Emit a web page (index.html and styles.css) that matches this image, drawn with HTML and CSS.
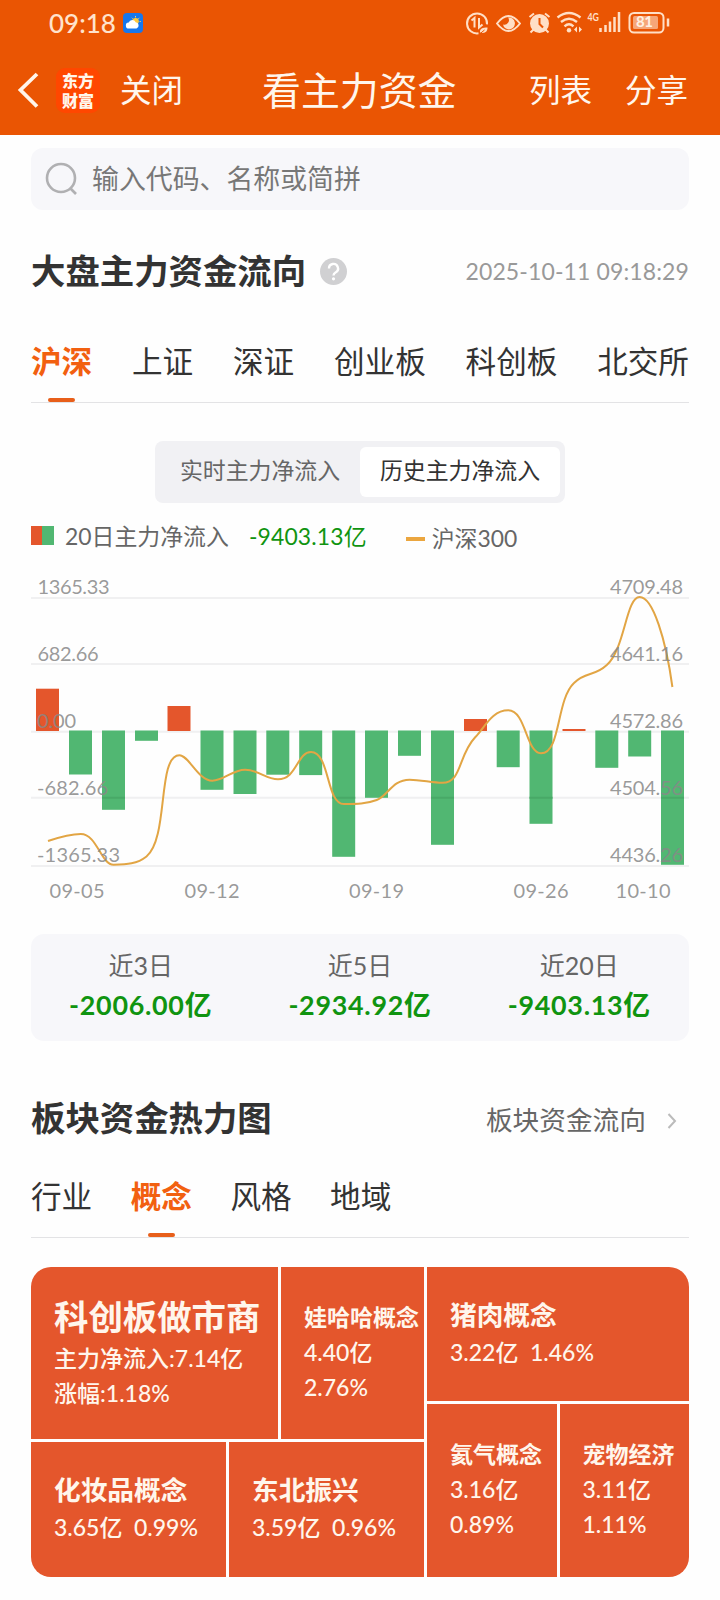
FILE: index.html
```html
<!DOCTYPE html>
<html lang="zh-CN">
<head>
  <meta charset="UTF-8">
  <meta name="viewport" content="width=device-width, initial-scale=1">
  <title>看主力资金</title>
  <link rel="stylesheet" href="styles.css">
</head>
<body>
  <header class="header">
    <!-- 状态栏 -->
    <div class="status">
      <span class="time">09:18</span>
      <svg class="weather" width="20" height="20" viewBox="0 0 20 20">
        <rect width="20" height="20" rx="4" fill="#1677ee"/>
        <path d="M12.5 3v1.4M16.4 4.8l-1 1M17.8 8.5h-1.2M8.8 4.8l.8.8" stroke="#ffd65a" stroke-width="1"/>
        <circle cx="12.6" cy="8.2" r="3.2" fill="#ffc93c"/>
        <path d="M6 15.5a3 3 0 0 1-.3-6 3.800 3.800 0 0 1 7-.2 3.200 3.200 0 0 1 .8 6.200z" fill="#fff"/>
      </svg>
      <svg class="status-icons" width="206" height="26" viewBox="464 10 206 26" fill="none" stroke="#ffdfc6" stroke-width="2">
        <!-- 省流量 -->
        <path d="M478.500 33.300a10 10 0 1 1 8.500-9"/>
        <path d="M471.500 20.500l3-2.500v9.500M479 18v9.500l3.500-3" stroke-width="2"/>
        <path d="M480 32.500c-.5-4 2.500-5 7.500-5 0 4-2.500 6.500-7.500 5z" fill="#ffdfc6" stroke="none"/>
        <path d="M479 34.500l5.500-4.500" stroke="#ea5503" stroke-width="1"/>
        <!-- 护眼 -->
        <path d="M497 23.500q11.500-15 23 0q-11.500 15-23 0z" stroke-linejoin="round"/>
        <path d="M508 17.500a6 6 0 1 1-5 7 4.500 4.500 0 0 0 5-7z" fill="#ffdfc6" stroke="none"/>
        <!-- 闹钟 -->
        <circle cx="539.500" cy="23.500" r="9.500" fill="#ffdfc6" stroke="none"/>
        <path d="M529.500 17l4.500-3.500M549.500 17l-4.500-3.500M533.500 29.500l-3 3M545.500 29.500l3 3"/>
        <path d="M539.500 18v6l3.500 3.500" stroke="#ea5503"/>
        <!-- wifi -->
        <path d="M557.500 17.500q11.500-9 23 0M561 22q8-6.500 16 0M564.500 26.300q4.500-4 9 0" stroke-width="2.400"/>
        <circle cx="569" cy="30.300" r="2.200" fill="#ffdfc6" stroke="none"/>
        <path d="M577 26.500v6l-3-3zM579 26.500v6l3-3z" fill="#ffdfc6" stroke="none"/>
        <!-- 信号 -->
        <path d="M600.500 32v-4M605.500 32v-7M610 32v-10.500M614.500 32v-15M619 32v-20" stroke-width="2.500"/>
        <text class="net" x="587.500" y="21" textLength="11.500" lengthAdjust="spacingAndGlyphs">4G</text>
        <!-- 电池 -->
        <rect x="629.500" y="13" width="34" height="19.500" rx="4.500"/>
        <rect x="633" y="16" width="25" height="13" rx="1.500" fill="#f6a678" stroke="none"/>
        <path d="M668 18.500v8" stroke-width="2.500"/>
        <text class="battery" x="636" y="27.200" textLength="17">81</text>
      </svg>
    </div>
    <!-- 导航栏 -->
    <div class="nav">
      <svg class="back" width="24" height="40" viewBox="0 0 24 40">
        <path d="M20 4L3.500 20L20 36.500" fill="none" stroke="#fff6ec" stroke-width="3.800"/>
      </svg>
      <div class="logo"><span>东方</span><span>财富</span></div>
      <span class="close">关闭</span>
      <h1 class="title">看主力资金</h1>
      <span class="action">列表</span>
      <span class="action">分享</span>
    </div>
  </header>

  <main class="main">
    <div class="search">
      <svg width="34" height="34" viewBox="0 0 34 34" fill="none" stroke="#b0b0b2" stroke-width="2.600">
        <circle cx="16" cy="16" r="14"/>
        <path d="M25.500 26.500l5.500 5.500"/>
      </svg>
      <span>输入代码、名称或简拼</span>
    </div>

    <div class="section-head">
      <h2>大盘主力资金流向</h2>
      <svg class="help" width="27" height="27" viewBox="0 0 27 27">
        <circle cx="13.500" cy="13.500" r="13.500" fill="#d0d0d2"/>
        <path d="M9 10.500a4.500 4.500 0 1 1 6.800 3.800q-2.300 1.300-2.300 3.200" fill="none" stroke="#fff" stroke-width="2.400"/>
        <circle cx="13.500" cy="20.800" r="1.600" fill="#fff"/>
      </svg>
      <span class="date">2025-10-11 09:18:29</span>
    </div>

    <nav class="tabs tabs-market">
      <span class="tab active">沪深</span>
      <span class="tab">上证</span>
      <span class="tab">深证</span>
      <span class="tab">创业板</span>
      <span class="tab">科创板</span>
      <span class="tab">北交所</span>
    </nav>

    <div class="toggle">
      <span class="toggle-item">实时主力净流入</span>
      <span class="toggle-item on">历史主力净流入</span>
    </div>

    <div class="legend">
      <i class="legend-bar"></i>
      <span>20日主力净流入</span>
      <span class="legend-value">-9403.13亿</span>
      <i class="legend-line"></i>
      <span class="legend-index">沪深300</span>
    </div>

    <!-- 柱状图 + 沪深300折线 -->
    <svg class="chart" width="658" height="340" viewBox="31 570 658 340">
      <path class="grid" d="M31 598H689M31 664H689M31 731.700H689M31 797.800H689M31 866H689"/>
      <g class="up">
        <rect x="36" y="688.700" width="23" height="42.300"/>
        <rect x="167.500" y="706" width="23" height="25"/>
        <rect x="464" y="719" width="23" height="12"/>
        <rect x="562.500" y="729" width="23" height="2"/>
      </g>
      <g class="down">
        <rect x="69" y="730.500" width="23" height="44"/>
        <rect x="102" y="730.500" width="23" height="79.300"/>
        <rect x="135" y="730.500" width="23" height="10.300"/>
        <rect x="200.500" y="730.500" width="23" height="59.300"/>
        <rect x="233.500" y="730.500" width="23" height="63.500"/>
        <rect x="266.300" y="730.500" width="23" height="44.200"/>
        <rect x="299.200" y="730.500" width="23" height="44.600"/>
        <rect x="332.200" y="730.500" width="23" height="126.300"/>
        <rect x="365" y="730.500" width="23" height="67.300"/>
        <rect x="398" y="730.500" width="23" height="25.300"/>
        <rect x="431" y="730.500" width="23" height="114.300"/>
        <rect x="496.700" y="730.500" width="23" height="36.700"/>
        <rect x="529.500" y="730.500" width="23" height="93.300"/>
        <rect x="595.300" y="730.500" width="23" height="37.300"/>
        <rect x="628.200" y="730.500" width="23" height="26"/>
        <rect x="661" y="730.500" width="23" height="134.300"/>
      </g>
      <path class="grid-over" d="M102 797.800h23M332.200 797.800h23M431 797.800h23M529.500 797.800h23M661 797.800h23"/>
      <path class="line" d="M48 841C60 837 71 834 80.800 834C97 834 101 864.800 113.600 864.800C127 864.500 137 864 146.500 856.500C169 838 157 755.300 179.400 755.300C189 755.300 198 780.700 212.300 780.700C224 780.700 232 769.700 245.200 769.700C258 769.700 266 779.300 278 779.300C297 779.300 297 752 311 752C330 752 326 804 343.800 804C357 804 366 804 376.700 800C388 796 392 779.700 409.600 779.700C421 779.700 432 782.800 442.500 782.800C462 782.800 458 755 475.400 737C485 727 492 710.300 508.300 710.300C526 710.300 526 753.300 541 753.300C561 753.300 556 700 574 683C586 671 594 677 606.800 665C625 649 626 597 639.600 597C653 597 666 640 672.400 687"/>
      <g class="axis">
        <text x="37.500" y="594" textLength="72">1365.33</text>
        <text x="37.500" y="661" textLength="61">682.66</text>
        <text x="37" y="728" textLength="39">0.00</text>
        <text x="37" y="795" textLength="71">-682.66</text>
        <text x="37" y="862" textLength="83">-1365.33</text>
        <text x="610" y="594" textLength="73">4709.48</text>
        <text x="610" y="661" textLength="73">4641.16</text>
        <text x="610" y="728" textLength="73">4572.86</text>
        <text x="610" y="795" textLength="73">4504.56</text>
        <text x="610" y="862" textLength="73">4436.26</text>
      </g>
      <g class="axis days">
        <text x="49.500" y="897.500" textLength="55">09-05</text>
        <text x="184.500" y="897.500" textLength="55">09-12</text>
        <text x="349" y="897.500" textLength="55">09-19</text>
        <text x="513.500" y="897.500" textLength="55">09-26</text>
        <text x="615.500" y="897.500" textLength="55">10-10</text>
      </g>
    </svg>

    <div class="summary">
      <div class="summary-item"><span>近3日</span><b>-2006.00亿</b></div>
      <div class="summary-item"><span>近5日</span><b>-2934.92亿</b></div>
      <div class="summary-item"><span>近20日</span><b>-9403.13亿</b></div>
    </div>

    <div class="section-head heat-head">
      <h2>板块资金热力图</h2>
      <a class="more">板块资金流向
        <svg width="10" height="18" viewBox="0 0 10 18"><path d="M1.500 2l6.500 7-6.500 7" fill="none" stroke="#bbb" stroke-width="2"/></svg>
      </a>
    </div>

    <nav class="tabs tabs-board">
      <span class="tab">行业</span>
      <span class="tab active">概念</span>
      <span class="tab">风格</span>
      <span class="tab">地域</span>
    </nav>

    <!-- 热力图 -->
    <div class="heatmap">
      <div class="heat-left">
        <div class="heat-row heat-top">
          <div class="tile tile-xl"><b>科创板做市商</b><span>主力净流入:7.14亿</span><span>涨幅:1.18%</span></div>
          <div class="tile tile-sm"><b>娃哈哈概念</b><span>4.40亿</span><span>2.76%</span></div>
        </div>
        <div class="heat-row">
          <div class="tile"><b>化妆品概念</b><span>3.65亿&ensp;0.99%</span></div>
          <div class="tile"><b>东北振兴</b><span>3.59亿&ensp;0.96%</span></div>
        </div>
      </div>
      <div class="heat-right">
        <div class="tile tile-wide"><b>猪肉概念</b><span>3.22亿&ensp;1.46%</span></div>
        <div class="heat-row">
          <div class="tile tile-sm"><b>氦气概念</b><span>3.16亿</span><span>0.89%</span></div>
          <div class="tile tile-sm"><b>宠物经济</b><span>3.11亿</span><span>1.11%</span></div>
        </div>
      </div>
    </div>
  </main>
</body>
</html>
```
FILE: styles.css
```css
* {
  box-sizing: border-box;
}
body {
  margin: 0;
  width: 720px;
  height: 1600px;
  overflow: hidden;
  background: #fefefe;
  color: #333;
  font-family: Lato, "Noto Sans CJK SC", sans-serif;
  white-space: nowrap;
}
h1, h2 {
  margin: 0;
}

/* 顶部 */
.header {
  height: 135px;
  background: #ea5503;
  color: #fff6ec;
}
.status {
  display: flex;
  align-items: center;
  height: 46px;
  padding-left: 49px;
}
.time {
  width: 74px;
  font-size: 26px;
  font-weight: 500;
  line-height: 46px;
  color: #ffe3cc;
}
.status-icons {
  margin-left: 321px;
}
.net {
  font-size: 12px;
  font-weight: 700;
  fill: #ffdfc6;
  stroke: none;
}
.battery {
  font-size: 15px;
  font-weight: 700;
  fill: #fff0e2;
  stroke: none;
}
.nav {
  display: flex;
  align-items: center;
  height: 88px;
  padding: 0 32px 0 17px;
}
.logo {
  display: flex;
  flex-direction: column;
  justify-content: center;
  align-items: center;
  width: 44px;
  height: 45px;
  margin: 0 20px 0 15px;
  border-radius: 9px;
  background: #ff4700;
  font-family: "Noto Sans CJK SC", sans-serif;
  font-size: 16px;
  font-weight: 900;
  line-height: 20px;
}
.close, .action {
  font-size: 31.5px;
  line-height: 46px;
}
.title {
  margin: 0 auto 0 79px;
  font-size: 38.9px;
  font-weight: 400;
  line-height: 50px;
}
.action {
  margin-left: 33px;
}

.main {
  padding: 13px 31px 0;
}
.search {
  display: flex;
  align-items: center;
  height: 62px;
  padding-left: 14px;
  border-radius: 12px;
  background: #f7f7fa;
  color: #777;
  font-size: 26.9px;
}
.search span {
  margin-left: 13px;
  line-height: 40px;
}

.section-head {
  display: flex;
  align-items: center;
  height: 50px;
  margin-top: 36px;
}
.section-head h2 {
  font-size: 34.4px;
  font-weight: 700;
  line-height: 50px;
}
.help {
  margin-left: 14px;
}
.date {
  margin-left: auto;
  color: #999;
  font-size: 23px;
  letter-spacing: 0.12px;
}

/* 标签 */
.tabs {
  display: flex;
  height: 69px;
  border-bottom: 1px solid #e3e3e5;
  font-size: 30.6px;
  line-height: 46px;
}
.tabs-market {
  justify-content: space-between;
  margin-top: 38px;
}
.tab {
  display: flex;
  flex-direction: column;
  align-items: center;
  justify-content: space-between;
  padding-top: 5px;
}
.tab.active {
  color: #f26010;
  font-weight: 700;
}
.tab.active::after {
  content: "";
  width: 27px;
  height: 4px;
  border-radius: 2px;
  background: #e85f1a;
}

.toggle {
  display: flex;
  width: 410px;
  height: 62px;
  margin: 38px auto 0;
  padding: 6px 5px;
  border-radius: 8px;
  background: #f1f1f4;
  color: #666;
  font-size: 22.9px;
  line-height: 47px;
  text-align: center;
}
.toggle-item {
  flex: 1;
  border-radius: 6px;
}
.toggle-item.on {
  background: #fff;
  color: #333;
}

.legend {
  display: flex;
  align-items: center;
  height: 40px;
  margin-top: 13px;
  color: #666;
  font-size: 22.9px;
  line-height: 40px;
}
.legend-bar {
  width: 23px;
  height: 19px;
  margin: 0 11px 2px 0;
  background: linear-gradient(90deg, #e4562c 48%, #51b772 48%);
}
.legend-value {
  margin-left: 20px;
  color: #109410;
  letter-spacing: 0.15px;
}
.legend-line {
  width: 19px;
  height: 4px;
  margin: 6px 7px 0 39px;
  background: #eba63f;
}
.legend-index {
  padding-top: 3px;
}

/* 图表 */
.chart {
  display: block;
  margin-top: 14px;
}
.grid {
  stroke: #f0f0f1;
  stroke-width: 2;
}
.grid-over {
  stroke: #48a967;
  stroke-width: 2;
}
.up {
  fill: #e4562c;
}
.down {
  fill: #51b772;
}
.line {
  fill: none;
  stroke: #e2a544;
  stroke-width: 2;
}
.axis {
  fill: #888;
  fill-opacity: 0.85;
  font-size: 20px;
}

.summary {
  display: flex;
  height: 107px;
  margin-top: 24px;
  padding-top: 11px;
  border-radius: 13px;
  background: #f7f7fa;
}
.summary-item {
  display: flex;
  flex: 1;
  flex-direction: column;
  align-items: center;
  color: #666;
  font-size: 25px;
  line-height: 40px;
}
.summary-item b {
  color: #109410;
  font-size: 26.9px;
  letter-spacing: 0.7px;
}

.heat-head {
  margin-top: 52px;
}
.more {
  display: flex;
  align-items: center;
  gap: 21px;
  margin-left: auto;
  padding-right: 12px;
  color: #666;
  font-size: 26.7px;
}
.more svg {
  margin-top: 5px;
}
.tabs-board {
  gap: 38.500px;
  margin-top: 26px;
}

.heatmap {
  display: flex;
  gap: 3px;
  height: 310px;
  margin-top: 29px;
  border-radius: 20px;
  overflow: hidden;
  color: #fff6ec;
}
.heat-left, .heat-right {
  display: flex;
  flex-direction: column;
  gap: 3px;
}
.heat-left {
  width: 393px;
}
.heat-right {
  width: 262px;
}
.heat-row {
  display: flex;
  flex: 1;
  gap: 3px;
}
.heat-top {
  flex: 0 0 172px;
}
.tile {
  display: flex;
  flex: 1;
  flex-direction: column;
  justify-content: center;
  padding: 0 0 3px 23px;
  background: #e4562c;
  font-size: 23px;
  font-weight: 500;
  line-height: 35px;
}
.tile b {
  font-size: 26.7px;
  line-height: 39px;
}
.tile-xl {
  flex: 0 0 247px;
}
.tile-xl b {
  font-size: 34.4px;
  line-height: 48px;
}
.tile-sm b {
  font-size: 23px;
  line-height: 36px;
}
.tile-wide {
  flex: 0 0 134px;
}
```
